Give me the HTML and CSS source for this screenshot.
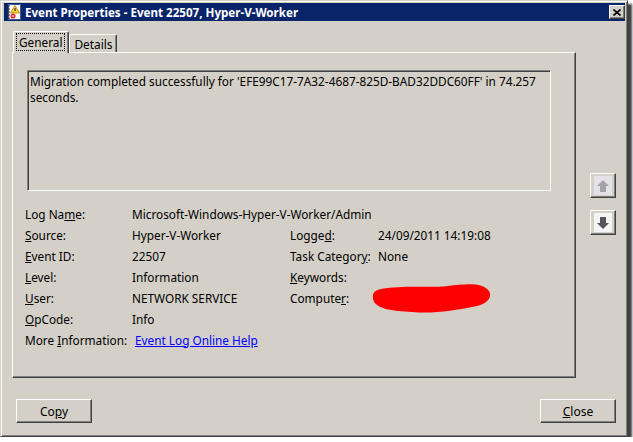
FILE: index.html
```html
<!DOCTYPE html>
<html lang="en">

<head>
  <meta charset="UTF-8">
  <title>Event Properties - Event 22507, Hyper-V-Worker</title>
  <link rel="stylesheet" href="styles.css">
</head>

<body>
  <div class="window">
    <div class="titlebar">
      <svg class="app-icon" width="16" height="16" viewBox="0 0 16 16">
        <rect x="2.5" y="0.5" width="12" height="15" fill="#fff" stroke="#3a5a9c" />
        <path d="M1 2h3M1 5h3M1 8h3M1 11h3M1 14h3" stroke="#333" stroke-width="1" />
        <path d="M9 1.5L13.5 9H4.5Z" fill="#f8d030" stroke="#b08000" stroke-width="0.8" />
        <rect x="8.6" y="4" width="0.9" height="3" fill="#000" />
        <circle cx="7" cy="12" r="2.6" fill="#e03030" />
        <path d="M5.8 12h2.4" stroke="#fff" stroke-width="1" />
      </svg>
      <span class="title">Event Properties - Event 22507, Hyper-V-Worker</span>
      <button class="title-close">
        <svg width="8" height="7" viewBox="0 0 8 7">
          <path d="M0.5 0.5L7.5 6.5M7.5 0.5L0.5 6.5" stroke="#000" stroke-width="1.6" />
        </svg>
      </button>
    </div>

    <div class="body">
      <div class="main">
        <div class="tabs">
          <div class="tab active"><span class="focus">General</span></div>
          <div class="tab">Details</div>
        </div>
        <div class="panel">
          <div class="message">Migration completed successfully for 'EFE99C17-7A32-4687-825D-BAD32DDC60FF' in 74.257<br>seconds.</div>

          <div class="props">
            <div class="label">Log Na<u>m</u>e:</div>
            <div class="value wide">Microsoft-Windows-Hyper-V-Worker/Admin</div>

            <div class="label"><u>S</u>ource:</div>
            <div class="value">Hyper-V-Worker</div>
            <div class="label">Logge<u>d</u>:</div>
            <div class="value">24/09/2011 14:19:08</div>

            <div class="label"><u>E</u>vent ID:</div>
            <div class="value">22507</div>
            <div class="label">Task Categor<u>y</u>:</div>
            <div class="value">None</div>

            <div class="label"><u>L</u>evel:</div>
            <div class="value">Information</div>
            <div class="label"><u>K</u>eywords:</div>
            <div class="value"></div>

            <div class="label"><u>U</u>ser:</div>
            <div class="value">NETWORK SERVICE</div>
            <div class="label">Compute<u>r</u>:</div>
            <div class="value redacted">
              <svg class="scribble" width="120" height="32" viewBox="0 0 120 32">
                <path d="M9 6C30 2 58 5 76 3C96 0 112 0 117 8C121 15 114 22 100 24C84 27 62 31 40 29C20 28 3 26 1 16C0 10 3 7 9 6Z" fill="#ff0000" />
              </svg>
            </div>

            <div class="label"><u>O</u>pCode:</div>
            <div class="value wide">Info</div>

            <div class="label">More <u>I</u>nformation:</div>
            <div class="value wide"><a href="#" class="link">Event Log Online Help</a></div>
          </div>
        </div>
      </div>

      <div class="side">
        <button class="arrow-btn" disabled>
          <span class="arrow-face">
            <svg width="12" height="12" viewBox="0 0 12 12">
              <path d="M6 0L12 6H9V12H3V6H0Z" fill="#a4a4a4" />
            </svg>
          </span>
        </button>
        <button class="arrow-btn">
          <span class="arrow-face">
            <svg width="12" height="12" viewBox="0 0 12 12">
              <path d="M6 12L12 6H9V0H3V6H0Z" fill="#555" />
            </svg>
          </span>
        </button>
      </div>
    </div>

    <div class="footer">
      <button class="btn">Co<u>p</u>y</button>
      <button class="btn"><u>C</u>lose</button>
    </div>
  </div>
</body>

</html>
```

FILE: styles.css
```css
body {
  margin: 0;
  background-color: #fff;
  font-family: "Noto Sans", "DejaVu Sans", sans-serif;
  font-size: 11.8px;
  color: #000;
}

.window {
  width: 628px;
  height: 437px;
  box-sizing: border-box;
  background-color: #d4d0c8;
  border: 1px solid;
  border-color: #d4d0c8 #404040 #404040 #d4d0c8;
  box-shadow: inset 1px 1px #fff, inset -1px -1px #808080, 4px 4px 2px rgba(0, 0, 0, 0.75);
  padding: 2px 2px 2px 3px;
  display: flex;
  flex-direction: column;
}

.titlebar {
  height: 18px;
  background-color: #0a246a;
  color: #fff;
  display: flex;
  align-items: center;
  padding: 0 0 0 2px;
}

.app-icon {
  margin-right: 3px;
}

.title {
  font-weight: bold;
  font-size: 11.6px;
}

.title-close {
  margin-left: auto;
  width: 16px;
  height: 14px;
  padding: 0;
  background-color: #d4d0c8;
  border: 1px solid;
  border-color: #fff #404040 #404040 #fff;
  box-shadow: inset -1px -1px #808080;
  display: flex;
  align-items: center;
  justify-content: center;
}

.body {
  display: flex;
  padding: 9px 0 0 8px;
}

.tabs {
  display: flex;
  align-items: flex-end;
  height: 22px;
  padding-left: 3px;
}

.tab {
  height: 18px;
  line-height: 18px;
  padding: 0 4px 0 4px;
  border-top: 1px solid #fff;
  border-left: 1px solid #fff;
  border-right: 1px solid #404040;
  box-shadow: inset -1px 0 #808080;
  border-radius: 2px 2px 0 0;
  box-sizing: border-box;
}

.tab.active {
  height: 22px;
  margin: 0 0 -1px -2px;
  padding: 1px 3px 0 2px;
  background-color: #d4d0c8;
  position: relative;
  z-index: 1;
  line-height: 16px;
}

.focus {
  display: inline-block;
  border: 1px dotted #000;
  padding: 0 2px;
  line-height: 16px;
}

.panel {
  width: 564px;
  height: 326px;
  box-sizing: border-box;
  border: 1px solid;
  border-color: #fff #404040 #404040 #fff;
  box-shadow: inset -1px -1px #808080;
  padding: 17px 0 0 14px;
}

.message {
  width: 524px;
  height: 121px;
  box-sizing: border-box;
  border: 1px solid;
  border-color: #808080 #fff #fff #808080;
  box-shadow: inset 1px 1px #404040, inset -1px -1px #d4d0c8;
  padding: 2px 2px;
  line-height: 16px;
}

.props {
  display: grid;
  grid-template-columns: 107px 158px 88px 1fr;
  grid-auto-rows: 21px;
  align-items: center;
  margin: 12px 0 0 -2px;
}

.value.wide {
  grid-column: 2 / 5;
}

.redacted {
  position: relative;
  height: 21px;
}

.scribble {
  position: absolute;
  left: -6px;
  top: -4px;
}

.link {
  color: #0000ff;
  margin-left: 3px;
}

.side {
  display: flex;
  flex-direction: column;
  gap: 12px;
  padding: 143px 0 0 14px;
}

.arrow-btn {
  width: 26px;
  height: 25px;
  padding: 0;
  background-color: #d4d0c8;
  border: 1px solid;
  border-color: #fff #404040 #404040 #fff;
  box-shadow: inset -1px -1px #808080;
  display: flex;
  align-items: center;
  justify-content: center;
}

.arrow-face {
  width: 18px;
  height: 19px;
  display: flex;
  align-items: center;
  justify-content: center;
  background-color: #f4f4f4;
}

.arrow-btn[disabled] .arrow-face {
  background-color: #e4e2e8;
}

.footer {
  display: flex;
  justify-content: space-between;
  padding: 21px 9px 0 12px;
}

.btn {
  width: 76px;
  height: 24px;
  padding: 0;
  background-color: #d4d0c8;
  border: 1px solid;
  border-color: #fff #404040 #404040 #fff;
  box-shadow: inset -1px -1px #808080;
  font-family: inherit;
  font-size: 12px;
  color: #000;
}
```
